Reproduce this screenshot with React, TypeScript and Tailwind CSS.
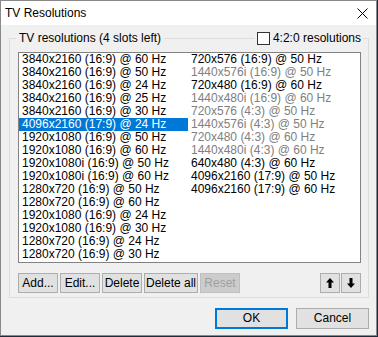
import React from "react";

const left = [
  "3840x2160 (16:9) @ 60 Hz",
  "3840x2160 (16:9) @ 50 Hz",
  "3840x2160 (16:9) @ 24 Hz",
  "3840x2160 (16:9) @ 25 Hz",
  "3840x2160 (16:9) @ 30 Hz",
  "4096x2160 (17:9) @ 24 Hz",
  "1920x1080 (16:9) @ 50 Hz",
  "1920x1080 (16:9) @ 60 Hz",
  "1920x1080i (16:9) @ 50 Hz",
  "1920x1080i (16:9) @ 60 Hz",
  "1280x720 (16:9) @ 50 Hz",
  "1280x720 (16:9) @ 60 Hz",
  "1920x1080 (16:9) @ 24 Hz",
  "1920x1080 (16:9) @ 30 Hz",
  "1280x720 (16:9) @ 24 Hz",
  "1280x720 (16:9) @ 30 Hz",
];

const right: { t: string; g?: boolean }[] = [
  { t: "720x576 (16:9) @ 50 Hz" },
  { t: "1440x576i (16:9) @ 50 Hz", g: true },
  { t: "720x480 (16:9) @ 60 Hz" },
  { t: "1440x480i (16:9) @ 60 Hz", g: true },
  { t: "720x576 (4:3) @ 50 Hz", g: true },
  { t: "1440x576i (4:3) @ 50 Hz", g: true },
  { t: "720x480 (4:3) @ 60 Hz", g: true },
  { t: "1440x480i (4:3) @ 60 Hz", g: true },
  { t: "640x480 (4:3) @ 60 Hz" },
  { t: "4096x2160 (17:9) @ 50 Hz" },
  { t: "4096x2160 (17:9) @ 60 Hz" },
];

function Btn({ children, w, disabled }: { children: React.ReactNode; w: string; disabled?: boolean }) {
  return (
    <div
      className={`${w} h-[20px] flex items-center justify-center border ${
        disabled ? "bg-[#cccccc] border-[#bfbfbf] text-[#a0a0a0]" : "bg-[#e1e1e1] border-[#adadad] text-black"
      }`}
    >
      {children}
    </div>
  );
}

export default function App() {
  return (
    <div className="w-[378px] h-[337px] bg-[#1d2b3a]" style={{ fontFamily: '"Liberation Sans", Arial, sans-serif' }}>
      <div className="w-[377px] h-[336px] border border-[#8a8a8a] flex flex-col text-[12px] leading-[13px]">
        {/* Title bar */}
        <div className="h-[24px] bg-white flex items-center justify-between pl-[4px] pr-[8px] shrink-0">
          <span className="text-black text-[12px]">TV Resolutions</span>
          <svg width="11" height="11" viewBox="0 0 11 11">
            <path d="M0.5 0.5 L10.5 10.5 M10.5 0.5 L0.5 10.5" stroke="#000" strokeWidth="1" fill="none" />
          </svg>
        </div>
        {/* Body */}
        <div className="flex-1 bg-[#f0f0f0] flex flex-col pl-[8px] pr-[7px] pt-[13px]">
          {/* Group box */}
          <div className="h-[260px] border border-[#dcdcdc] flex flex-col pl-[8px] pr-[7px]">
            <div className="-mt-[8px] h-[15px] flex items-center justify-between">
              <span className="ml-[-2px] px-[3px] bg-[#f0f0f0] text-black">TV resolutions (4 slots left)</span>
              <div className="flex items-center bg-[#f0f0f0] pl-[2px] pr-[2px] -mr-[2px]">
                <div className="w-[13px] h-[13px] border border-[#333333] bg-white" />
                <span className="ml-[3px] text-black">4:2:0 resolutions</span>
              </div>
            </div>
            {/* List box */}
            <div className="mt-[6px] h-[211px] border border-[#828282] bg-white flex">
              <div className="w-[169px] flex flex-col">
                {left.map((t, i) => (
                  <div
                    key={i}
                    className={`h-[13px] pl-[3px] whitespace-nowrap ${i === 5 ? "bg-[#0078d7] text-white" : "text-black"}`}
                  >
                    {t}
                  </div>
                ))}
              </div>
              <div className="w-[169px] flex flex-col">
                {right.map((r, i) => (
                  <div key={i} className={`h-[13px] pl-[3px] whitespace-nowrap ${r.g ? "text-[#808080]" : "text-black"}`}>
                    {r.t}
                  </div>
                ))}
              </div>
            </div>
            {/* Buttons */}
            <div className="mt-[10px] flex items-center">
              <div className="flex gap-[2px]">
                <Btn w="w-[40px]">Add...</Btn>
                <Btn w="w-[40px]">Edit...</Btn>
                <Btn w="w-[40px]">Delete</Btn>
                <Btn w="w-[54px]">Delete all</Btn>
                <Btn w="w-[40px]" disabled>
                  Reset
                </Btn>
              </div>
              <div className="ml-auto flex gap-[1px]">
                <Btn w="w-[20px]">
                  <svg width="8" height="10" viewBox="0 0 8 10">
                    <path d="M4 0 L8 4.5 L5.5 4.5 L5.5 10 L2.5 10 L2.5 4.5 L0 4.5 Z" fill="#000" />
                  </svg>
                </Btn>
                <Btn w="w-[20px]">
                  <svg width="8" height="10" viewBox="0 0 8 10">
                    <path d="M4 10 L8 5.5 L5.5 5.5 L5.5 0 L2.5 0 L2.5 5.5 L0 5.5 Z" fill="#000" />
                  </svg>
                </Btn>
              </div>
            </div>
          </div>
          {/* Dialog buttons */}
          <div className="mt-[10px] flex justify-end gap-[8px]">
            <div className="w-[73px] h-[21px] flex items-center justify-center border-2 border-[#0078d7] bg-[#e1e1e1] text-black">
              OK
            </div>
            <div className="w-[73px] h-[21px] flex items-center justify-center border border-[#adadad] bg-[#e1e1e1] text-black">
              Cancel
            </div>
          </div>
        </div>
      </div>
    </div>
  );
}
